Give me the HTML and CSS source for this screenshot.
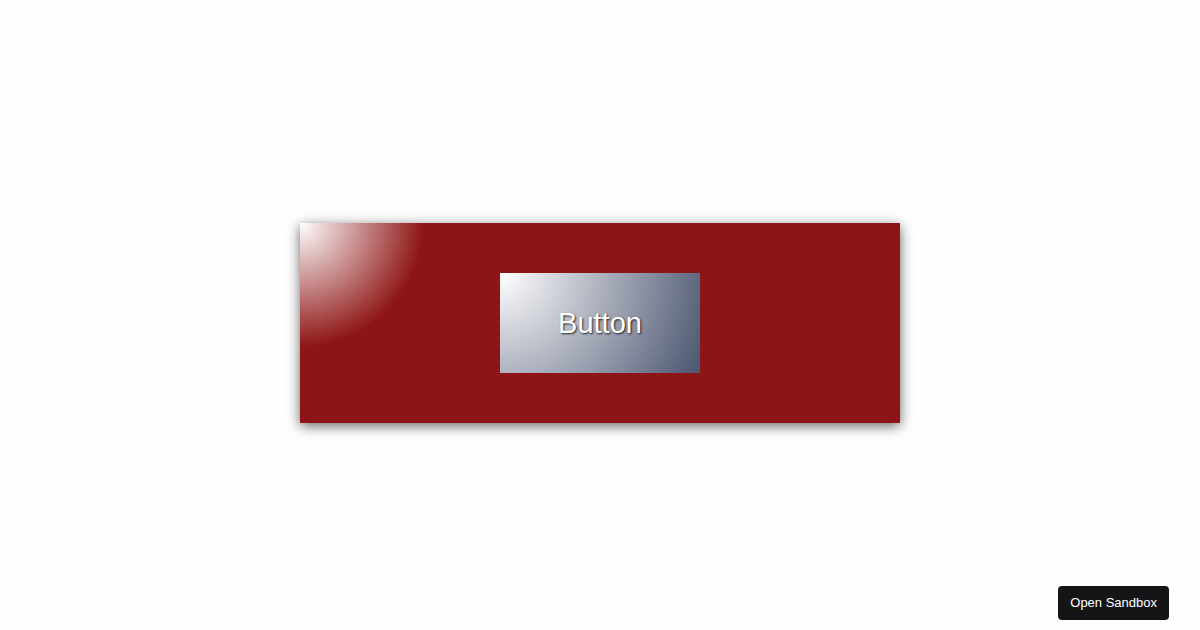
FILE: index.html
```html
<!DOCTYPE html>
<html lang="en">
<head>
  <meta charset="UTF-8">
  <title>Button Gradient</title>
  <link rel="stylesheet" href="styles.css">
</head>
<body>
  <!-- Red panel with the gradient button -->
  <div class="panel">
    <button class="fancy-btn">Button</button>
  </div>

  <a class="sandbox-link" href="#">Open Sandbox</a>
</body>
</html>
```

FILE: styles.css
```css
* {
  box-sizing: border-box;
}
body {
  margin: 0;
  height: 100vh;
  padding-top: 16px;
  background: #fefefe;
  font-family: 'Liberation Sans', Arial, sans-serif;
  display: flex;
  align-items: center;
  justify-content: center;
}
/* Panel */
.panel {
  width: 600px;
  height: 200px;
  display: flex;
  align-items: center;
  justify-content: center;
  background:
    radial-gradient(circle at 0 0, #ffffff 0, rgba(255, 255, 255, 0) 124px),
    #8e1515;
  box-shadow: 0 3px 12px rgba(0, 0, 0, 0.6);
}
.fancy-btn {
  width: 200px;
  height: 100px;
  border: none;
  padding: 0;
  font-family: inherit;
  font-size: 29px;
  color: #fff;
  text-shadow: 1px 1px 2px rgba(0, 0, 0, 0.8);
  background: radial-gradient(circle at 0 0, #ffffff 0, #4b5570 100%);
  cursor: pointer;
}
/* Floating link in the corner */
.sandbox-link {
  position: fixed;
  right: 31px;
  bottom: 10px;
  padding: 9px 12px;
  background: #151517;
  color: #fff;
  font-size: 13px;
  line-height: 16px;
  border-radius: 4px;
  text-decoration: none;
}
```
